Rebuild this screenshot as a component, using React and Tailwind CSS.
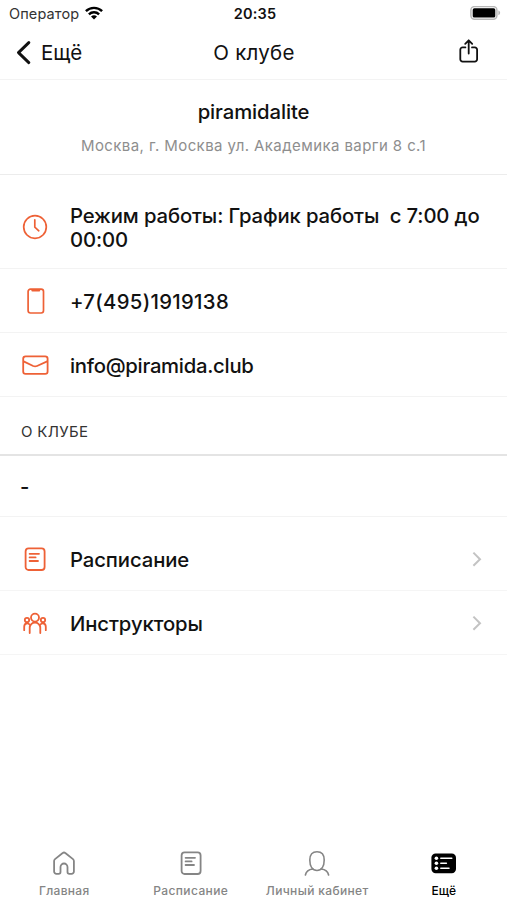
import React from 'react'

function WifiIcon() {
  return (
    <svg width="18" height="14" viewBox="0 0 18 14" fill="none" stroke="#000" strokeWidth="2.4">
      <path d="M0.9 5.2a11.6 11.6 0 0 1 16.2 0" />
      <path d="M3.9 8.3a7.3 7.3 0 0 1 10.2 0" />
      <path d="M9 13.6L6 10.6a4.3 4.3 0 0 1 6 0z" fill="#000" stroke="none" />
    </svg>
  )
}

function BatteryIcon() {
  return (
    <svg width="31" height="15" viewBox="0 0 31 15">
      <rect x="0.9" y="0.6" width="26" height="12.6" rx="3.6" fill="#fff" stroke="#b8b8b8" strokeWidth="1.5" />
      <rect x="2.7" y="2.3" width="22.6" height="9.2" rx="1.6" fill="#000" />
      <path d="M28.4 4.6c2.3.6 2.3 4 0 4.6z" fill="#b5b5b5" />
    </svg>
  )
}

function BackIcon() {
  return (
    <svg width="15" height="24" viewBox="0 0 15 24" fill="none" stroke="#111" strokeWidth="2.9" strokeLinecap="round" strokeLinejoin="round">
      <path d="M12.8 1.6L2.5 11.6l10.3 10" />
    </svg>
  )
}

function ShareIcon() {
  return (
    <svg width="20" height="24" viewBox="0 0 20 24" fill="none" stroke="#111" strokeWidth="1.8" strokeLinecap="round" strokeLinejoin="round">
      <path d="M6.4 8.4H3.6a2.3 2.3 0 0 0-2.3 2.3v9.6a2.3 2.3 0 0 0 2.3 2.3h12.2a2.3 2.3 0 0 0 2.3-2.3v-9.6a2.3 2.3 0 0 0-2.3-2.3H13" />
      <path d="M9.7 14.6V1.6M6.2 4.8l3.5-3.5 3.5 3.5" />
    </svg>
  )
}

function ClockIcon() {
  return (
    <svg width="28" height="28" viewBox="0 0 28 28" fill="none" stroke="#ee6136" strokeWidth="1.7" strokeLinecap="round" strokeLinejoin="round">
      <circle cx="14" cy="14" r="11.3" />
      <path d="M13.8 6.8v7.4l4 3.6" />
    </svg>
  )
}

function PhoneIcon() {
  return (
    <svg width="28" height="28" viewBox="0 0 28 28" fill="none" stroke="#ee6136" strokeWidth="1.7" strokeLinejoin="round">
      <rect x="7.1" y="2.2" width="15.4" height="23.8" rx="2.4" />
      <path d="M11.4 3.4h6.8" strokeWidth="2.2" strokeLinecap="round" />
    </svg>
  )
}

function MailIcon() {
  return (
    <svg width="28" height="28" viewBox="0 0 28 28" fill="none" stroke="#ee6136" strokeWidth="1.8" strokeLinejoin="round">
      <rect x="2.2" y="5.4" width="24.4" height="17.4" rx="2.4" />
      <path d="M2.6 10.4l9.6 4.6c1.4.6 2.4.6 3.8 0l10.2-4.6" />
    </svg>
  )
}

function ScheduleIcon({ className }) {
  return (
    <svg className={className} width="28" height="28" viewBox="0 0 28 28" fill="none" stroke="currentColor" strokeWidth="1.8" strokeLinecap="round">
      <rect x="4.6" y="3.4" width="19" height="21.6" rx="3" />
      <path d="M8.6 8.8h9.4M8.6 12.4h6M8.6 16h8.4" />
    </svg>
  )
}

function TrainersIcon() {
  return (
    <svg width="28" height="28" viewBox="0 0 28 28" fill="none" stroke="#ee6136" strokeWidth="1.8" strokeLinecap="round">
      <circle cx="14" cy="8.6" r="4" />
      <circle cx="6" cy="11" r="2.2" />
      <circle cx="22" cy="11" r="2.2" />
      <path d="M8.7 24v-5.2a5.3 5.3 0 0 1 10.6 0V24" />
      <path d="M3.2 21.2v-3.4c0-2.2 1.2-3.4 3-3.4 1.2 0 2 .5 2.6 1.5M24.8 21.2v-3.4c0-2.2-1.2-3.4-3-3.4-1.2 0-2 .5-2.6 1.5" />
    </svg>
  )
}

function ChevronIcon() {
  return (
    <svg width="10" height="16" viewBox="0 0 10 16" fill="none" stroke="#c3c3c3" strokeWidth="2">
      <path d="M1.4 1.6L8 8.2l-6.6 6.6" />
    </svg>
  )
}

function HomeIcon() {
  return (
    <svg width="28" height="28" viewBox="0 0 28 28" fill="none" stroke="currentColor" strokeWidth="1.8" strokeLinejoin="round">
      <path d="M4.1 12c0-.8.3-1.4.9-1.9l7.7-6.1a2 2 0 0 1 2.6 0l7.7 6.1c.6.5.9 1.1.9 1.9v10.6a2.3 2.3 0 0 1-2.3 2.3h-2.2a1.9 1.9 0 0 1-1.900-1.900v-5a3.500 3.500 0 0 0-7 0v5a1.900 1.900 0 0 1-1.900 1.900H6.400a2.300 2.300 0 0 1-2.300-2.300z" />
    </svg>
  )
}

function UserIcon() {
  return (
    <svg width="28" height="28" viewBox="0 0 28 28" fill="none" stroke="currentColor" strokeWidth="1.6" strokeLinecap="round">
      <path d="M14 2.8c4.5 0 7.2 2.8 7.2 8.2 0 6.4-2.7 10.5-7.2 10.5S6.800 17.400 6.800 11c0-5.400 2.700-8.200 7.200-8.200z" />
      <path d="M2.4 26c.7-3.4 3.2-5.5 7.400-6M25.600 26c-.7-3.400-3.200-5.500-7.400-6" />
    </svg>
  )
}

function MoreIcon() {
  return (
    <svg width="28" height="28" viewBox="0 0 28 28">
      <rect x="1.4" y="4.4" width="24.6" height="19.8" rx="4.2" fill="#000" />
      <g fill="#fff">
        <circle cx="6.4" cy="9.3" r="1.8" />
        <circle cx="6.4" cy="14.3" r="1.8" />
        <circle cx="6.4" cy="19.3" r="1.8" />
      </g>
      <path d="M10.8 9.3h11M10.8 14.3h5.6M10.8 19.3H19" stroke="#fff" strokeWidth="1.5" strokeLinecap="round" />
    </svg>
  )
}

const contacts = [
  { icon: <ClockIcon />, text: 'Режим работы: График работы\u00a0 с 7:00 до 00:00', layout: 'h-[94px] pt-[10px]', tracking: 'tracking-[-0.13px]' },
  { icon: <PhoneIcon />, text: '+7(495)1919138', layout: 'h-16', tracking: 'tracking-[0.32px]' },
  { icon: <MailIcon />, text: 'info@piramida.club', layout: 'h-16', tracking: 'tracking-[-0.27px]' },
]

const links = [
  { icon: <ScheduleIcon className="text-[#ee6136]" />, text: 'Расписание' },
  { icon: <TrainersIcon />, text: 'Инструкторы' },
]

const tabs = [
  { icon: <HomeIcon />, text: 'Главная', color: 'text-[#858585]', tracking: 'tracking-[0.3px]' },
  { icon: <ScheduleIcon />, text: 'Расписание', color: 'text-[#858585]', tracking: 'tracking-[0.4px]' },
  { icon: <UserIcon />, text: 'Личный кабинет', color: 'text-[#858585]', tracking: 'tracking-[0.35px]' },
  { icon: <MoreIcon />, text: 'Ещё', color: 'text-black', tracking: 'tracking-[0.1px]' },
]

export default function App() {
  return (
    <div className="flex h-[900px] w-[507px] flex-col overflow-hidden bg-white font-['Inter',sans-serif] text-[#111]">
      <div className="grid h-[26px] grid-cols-3 items-center pl-[9px] pr-[6px]">
        <div className="flex items-center gap-[6px]">
          <span className="pt-[2px] text-[14.5px] leading-5 tracking-[0.12px] text-[#333]">Оператор</span>
          <WifiIcon />
        </div>
        <span className="pt-[2px] text-center text-[14.5px] font-semibold leading-5 tracking-[0.2px]">20:35</span>
        <div className="flex justify-end">
          <BatteryIcon />
        </div>
      </div>

      <header className="grid h-[54px] grid-cols-3 items-center border-b border-[#f3f3f3] pl-[16px] pr-[28px]">
        <div className="flex items-center gap-[10px]">
          <BackIcon />
          <span className="text-[20.5px] leading-6">Ещё</span>
        </div>
        <h1 className="pl-[13px] text-center text-[20.5px] leading-6 tracking-[0.25px]">О клубе</h1>
        <div className="flex justify-end pb-[3px]">
          <ShareIcon />
        </div>
      </header>

      <main className="flex-1">
        <section className="flex h-[95px] flex-col items-center border-b border-[#ececec] pt-[20px]">
          <h2 className="text-[20.3px] font-medium leading-6 tracking-[-0.1px]">piramidalite</h2>
          <p className="mt-[12px] text-[15px] leading-5 tracking-[0.41px] text-[#8e8e8e]">
            Москва, г. Москва ул. Академика варги 8 с.1
          </p>
        </section>

        {contacts.map((item) => (
          <div key={item.text} className={`${item.layout} flex items-center border-b border-[#f3f3f3] pl-[21px] pr-[20px]`}>
            <div className="shrink-0">{item.icon}</div>
            <p className={`${item.tracking} ml-[21px] pt-[3px] text-[20.3px] font-medium leading-[24.4px]`}>{item.text}</p>
          </div>
        ))}

        <h3 className="flex h-[59px] items-end border-b-2 border-[#e4e4e4] pb-[12px] pl-[21px] text-[15px] leading-5 tracking-[0.3px] text-[#333]">
          О КЛУБЕ
        </h3>
        <p className="flex h-[61px] items-center border-b border-[#f3f3f3] pl-[20px] pt-[2px] text-[20.3px] font-medium">-</p>

        <nav className="pt-[10px]">
          {links.map((item) => (
            <div key={item.text} className="flex h-16 items-center border-b border-[#f5f5f5] pl-[21px] pr-[25px]">
              {item.icon}
              <span className="ml-[21px] flex-1 pt-[3px] text-[20.3px] font-medium tracking-[-0.1px]">{item.text}</span>
              <ChevronIcon />
            </div>
          ))}
        </nav>
      </main>

      <footer className="grid h-[51px] grid-cols-4 pl-px">
        {tabs.map((tab) => (
          <div key={tab.text} className={`${tab.color} flex flex-col items-center whitespace-nowrap`}>
            {tab.icon}
            <span className={`${tab.tracking} mt-[6px] text-[12px] font-medium leading-4`}>{tab.text}</span>
          </div>
        ))}
      </footer>
    </div>
  )
}
